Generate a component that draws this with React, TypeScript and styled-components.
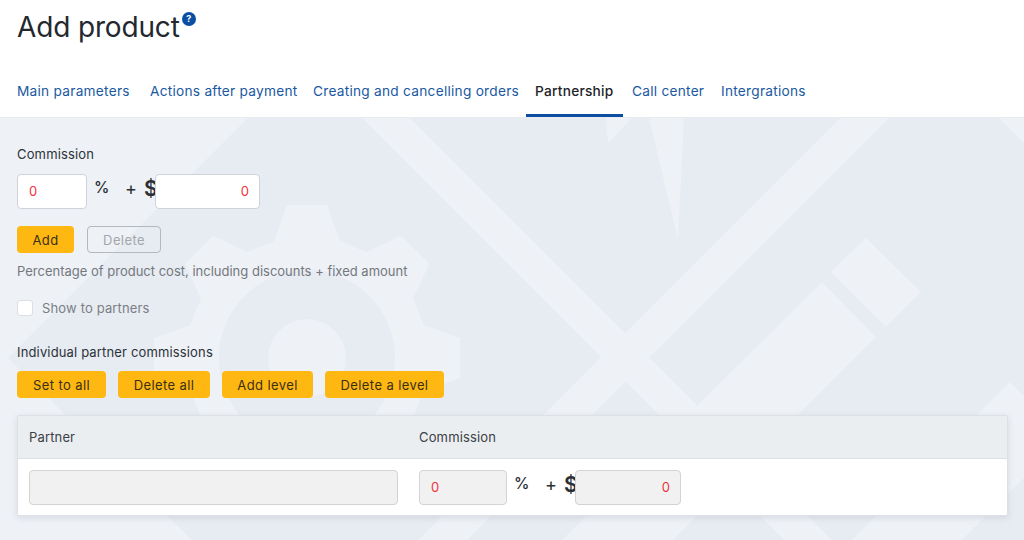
import React from "react";
import styled, { createGlobalStyle } from "styled-components";

const Global = createGlobalStyle`
  html, body { margin: 0; padding: 0; width: 1024px; height: 540px; overflow: hidden; }
  body { font-family: "Inter", "Liberation Sans", sans-serif; color: #222b33; background: #fff; }
  * { box-sizing: border-box; }
`;
const Page = styled.div`width:1024px;height:540px;display:flex;flex-direction:column;overflow:hidden;`;
const Header = styled.header`height:117px;flex:none;background:#fff;padding:9px 17px 0;display:flex;flex-direction:column;`;
const TitleRow = styled.div`display:flex;align-items:flex-start;height:54px;`;
const Title = styled.h1`margin:0;font-size:28px;line-height:36px;font-weight:400;color:#23282e;letter-spacing:-.15px;`;
const Help = styled.span`width:14px;height:14px;margin:3px 0 0 2px;border-radius:50%;background:#0b4ea2;color:#fff;font-size:9px;font-weight:700;line-height:14px;text-align:center;`;
const Tabs = styled.nav`display:flex;margin:9px 0 0 -9px;height:45px;`;
const Tab = styled.a<{ $active?: boolean; $w: number }>`
  width:${p => p.$w}px;height:45px;padding-left:9px;line-height:39px;font-size:13.7px;white-space:nowrap;letter-spacing:.25px;
  color:${p => p.$active ? "#1d2329" : "#19599f"};font-weight:${p => p.$active ? 500 : 400};
  border-bottom:3px solid ${p => p.$active ? "#0b4ea2" : "transparent"};
`;
const Main = styled.main`position:relative;flex:1;background:#eef1f6;border-top:1px solid #e8ebf0;padding:28px 16px 0 17px;overflow:hidden;`;
const Backdrop = styled.svg`position:absolute;left:0;top:0;width:1024px;height:422px;`;
const Content = styled.div`position:relative;display:flex;flex-direction:column;`;
const Label = styled.div`font-size:13px;line-height:16px;color:#2b3238;letter-spacing:.15px;`;
const Amounts = styled.div<{ $top?: number }>`display:flex;align-items:flex-start;height:35px;margin-top:${p => p.$top ?? 0}px;`;
const Field = styled.input<{ $w: number; $right?: boolean; $off?: boolean }>`
  width:${p => p.$w}px;height:35px;flex:none;border:1px solid ${p => p.$off ? "#d3d3d3" : "#cfd3d9"};border-radius:4px;
  padding:0 10px 1px 11px;font:400 13px "Inter",sans-serif;color:#f0323c;text-align:${p => p.$right ? "right" : "left"};
  background:${p => p.$off ? "#f1f1f1" : "#fff"};outline:0;opacity:1;-webkit-text-fill-color:#f0323c;
`;
const Pct = styled.span`width:39px;flex:none;padding:0 0 0 7px;font-size:15.5px;font-weight:500;line-height:28px;color:#2a3036;`;
const Plus = styled.span`font-size:18px;line-height:30px;width:19px;flex:none;color:#2a3036;margin-left:-1px;`;
const Dollar = styled.span`font-size:21px;line-height:29px;font-weight:600;width:11px;flex:none;color:#2a3036;`;
const Buttons = styled.div<{ $gap: number; $top: number }>`display:flex;gap:${p => p.$gap}px;margin-top:${p => p.$top}px;`;
const Btn = styled.button<{ $w: number; $ghost?: boolean }>`
  width:${p => p.$w}px;height:27px;padding:0;border-radius:4px;font:400 13px "Inter",sans-serif;letter-spacing:.4px;
  background:${p => p.$ghost ? "transparent" : "#ffb711"};color:${p => p.$ghost ? "#a3a6aa" : "#3a3016"};
  border:${p => p.$ghost ? "1px solid #b4b7bc" : "0"};
`;
const Hint = styled.div`font-size:13px;line-height:16px;color:#73787e;margin-top:10px;`;
const Check = styled.label`display:flex;align-items:center;gap:9px;margin-top:21px;font-size:13px;color:#7a7f85;line-height:16px;letter-spacing:.15px;`;
const Box = styled.span`width:16px;height:16px;border:1px solid #dcdfe4;border-radius:3px;background:#fff;`;
const Sub = styled(Label)`margin-top:28px;`;
const Card = styled.section`margin-top:17px;background:#fff;border:1px solid #dde1e6;border-radius:2px;box-shadow:0 2px 6px rgba(130,140,160,.22);width:991px;`;
const Head = styled.div`display:grid;grid-template-columns:390px 1fr;height:43px;background:#ebeef0;border-bottom:1px solid #dbe0e7;padding-left:11px;align-items:center;font-size:13px;color:#3a4046;letter-spacing:.15px;`;
const Row = styled.div`display:grid;grid-template-columns:390px 1fr;height:56px;padding:11px 0 0 11px;`;

const gearPoints = (() => {
  const cx = 307, cy = 358, pts: string[] = [];
  for (let i = 0; i < 8; i++) {
    const a = (i * Math.PI) / 4;
    const add = (along: number, across: number) => {
      const x = cx + along * Math.sin(a) + across * Math.cos(a);
      const y = cy - along * Math.cos(a) + across * Math.sin(a);
      pts.push(`${x.toFixed(1)},${y.toFixed(1)}`);
    };
    add(117, -33); add(153, -20); add(153, 20); add(117, 33);
  }
  return pts.join(" ");
})();

const dark = "#e7ebf2";
const light = "#eef1f6";

export default function App() {
  return (
    <Page>
      <Global />
      <Header>
        <TitleRow><Title>Add product</Title><Help>?</Help></TitleRow>
        <Tabs>
          <Tab $w={133}>Main parameters</Tab><Tab $w={163}>Actions after payment</Tab><Tab $w={222}>Creating and cancelling orders</Tab>
          <Tab $w={97} $active>Partnership</Tab><Tab $w={89}>Call center</Tab><Tab $w={107}>Intergrations</Tab>
        </Tabs>
      </Header>
      <Main>
        <Backdrop viewBox="0 118 1024 422" fill={light}>
          <polygon points="248,118 1024,118 1024,540 192,540 8,358" fill={dark} />
          <polygon points={gearPoints} />
          <circle cx="307" cy="358" r="88" fill={dark} />
          <circle cx="307" cy="358" r="39" />
          <polygon points="362,118 410,118 832,540 784,540" />
          <polygon points="840,118 889,118 467,540 418,540" />
          <polygon points="822,282 876,337 673,540 562,540" />
          <polygon points="866,238 921,292 886,327 830,272" />
          <polygon points="606,118 632,118 608,143" />
          <polygon points="649,118 684,118 678,240" />
          <polygon points="999,118 1024,118 1024,143" />
          <polygon points="1010,382 1024,396 1024,478 962,540 852,540" />
        </Backdrop>
        <Content>
          <Label>Commission</Label>
          <Amounts $top={12}>
            <Field $w={70} defaultValue="0" /><Pct>%</Pct><Plus>+</Plus><Dollar>$</Dollar><Field $w={105} $right defaultValue="0" />
          </Amounts>
          <Buttons $gap={13} $top={17}><Btn $w={57}>Add</Btn><Btn $w={74} $ghost>Delete</Btn></Buttons>
          <Hint>Percentage of product cost, including discounts + fixed amount</Hint>
          <Check><Box />Show to partners</Check>
          <Sub>Individual partner commissions</Sub>
          <Buttons $gap={12} $top={11}><Btn $w={89}>Set to all</Btn><Btn $w={92}>Delete all</Btn><Btn $w={91}>Add level</Btn><Btn $w={119}>Delete a level</Btn></Buttons>
          <Card>
            <Head><span>Partner</span><span>Commission</span></Head>
            <Row>
              <Field $w={369} $off disabled />
              <Amounts><Field $w={88} $off disabled value="0" /><Pct>%</Pct><Plus>+</Plus><Dollar>$</Dollar><Field $w={106} $off $right disabled value="0" /></Amounts>
            </Row>
          </Card>
        </Content>
      </Main>
    </Page>
  );
}
